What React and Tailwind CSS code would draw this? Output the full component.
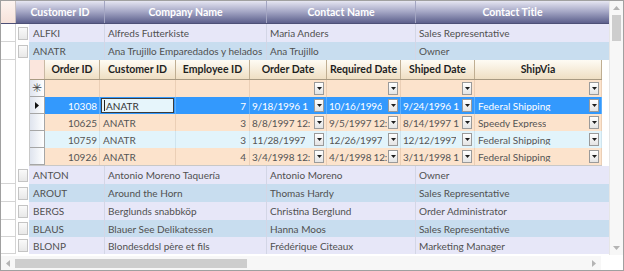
import React from "react";

const outerTop = [
    { id: "ALFKI", co: "Alfreds Futterkiste", ct: "Maria Anders", t: "Sales Representative", alt: false, h: "h-[18px]" },
    { id: "ANATR", co: "Ana Trujillo Emparedados y helados", ct: "Ana Trujillo", t: "Owner", alt: true, h: "h-[18px]" },
];

const outerBottom = [
    { id: "ANTON", co: "Antonio Moreno Taquería", ct: "Antonio Moreno", t: "Owner", alt: false, h: "h-[18px]" },
    { id: "AROUT", co: "Around the Horn", ct: "Thomas Hardy", t: "Sales Representative", alt: true, h: "h-[18px]" },
    { id: "BERGS", co: "Berglunds snabbköp", ct: "Christina Berglund", t: "Order Administrator", alt: false, h: "h-[18px]" },
    { id: "BLAUS", co: "Blauer See Delikatessen", ct: "Hanna Moos", t: "Sales Representative", alt: true, h: "h-[17px]" },
    { id: "BLONP", co: "Blondesddsl père et fils", ct: "Frédérique Citeaux", t: "Marketing Manager", alt: false, h: "h-[17px]" },
];

const orders = [
    { id: 10308, emp: 7, od: "9/18/1996 1", rd: "10/16/1996", sd: "9/24/1996 1", via: "Federal Shipping", kind: "sel" },
    { id: 10625, emp: 3, od: "8/8/1997 12:", rd: "9/5/1997 12:", sd: "8/14/1997 1", via: "Speedy Express", kind: "peach" },
    { id: 10759, emp: 3, od: "11/28/1997", rd: "12/26/1997", sd: "12/12/1997", via: "Federal Shipping", kind: "cyan" },
    { id: 10926, emp: 4, od: "3/4/1998 12:", rd: "4/1/1998 12:", sd: "3/11/1998 1", via: "Federal Shipping", kind: "peach" },
];

function DropBtn() {
    return (
        <span className="ml-auto mr-[2px] flex h-[13px] w-[10px] shrink-0 items-center justify-center border border-[#9a9a9a] bg-linear-to-b from-white to-[#e4e4e4]">
            <svg width="5" height="3" viewBox="0 0 5 3">
                <path d="M0 0h5L2.5 3z" fill="#1e1e1e" />
            </svg>
        </span>
    );
}

function Arrow({ dir }) {
    const d = {
        up: "M0 4L3.5 0L7 4z",
        down: "M0 0h7L3.5 4z",
        left: "M4 0v7L0 3.5z",
        right: "M0 0v7L4 3.5z",
    }[dir];
    const vert = dir === "up" || dir === "down";
    return (
        <svg width={vert ? 7 : 4} height={vert ? 4 : 7} viewBox={vert ? "0 0 7 4" : "0 0 4 7"}>
            <path d={d} fill="#b4b4b4" />
        </svg>
    );
}

function RowHead() {
    return <div className="w-[15px] shrink-0 self-stretch border-r border-b border-[#d4d4d4] bg-white" />;
}

function OuterRow({ r }) {
    const bg = r.alt ? "bg-[#c8ddef]" : "bg-[#e7e7f8]";
    const cell = "flex h-full shrink-0 items-center overflow-hidden whitespace-nowrap border-r border-[#d3d6e6] pl-[3px]";
    return (
        <div className={`flex ${r.h} text-[#505050]`}>
            <RowHead />
            <div className="flex h-full w-[13px] shrink-0 items-center justify-center bg-white">
                <span className="h-[13px] w-[10px] border border-[#c4c4c4] bg-linear-to-b from-[#fafafa] to-[#e8e8e8]" />
            </div>
            <div className={`flex h-full grow ${bg}`}>
                <div className={`${cell} w-[76px] pl-[4px]`}>{r.id}</div>
                <div className={`${cell} w-[162px]`}>{r.co}</div>
                <div className={`${cell} w-[149px]`}>{r.ct}</div>
                <div className={`${cell} grow border-r-0`}>{r.t}</div>
            </div>
        </div>
    );
}

function NestedHeader() {
    const h = "flex h-full shrink-0 items-center justify-center border-r border-[#bfae92] text-[10.5px] font-bold text-[#1f1f1f]";
    return (
        <div className="flex h-[20px] border-b border-[#a89a82] bg-linear-to-b from-[#fefbf4] to-[#efdfc3]">
            <div className="h-full w-[15px] shrink-0 border-r border-[#c9b9a4] bg-[#fbe6dd]" />
            <div className={`${h} w-[55px]`}>Order ID</div>
            <div className={`${h} w-[76px]`}>Customer ID</div>
            <div className={`${h} w-[74px]`}>Employee ID</div>
            <div className={`${h} w-[77px]`}>Order Date</div>
            <div className={`${h} w-[74px]`}>Required Date</div>
            <div className={`${h} w-[74px]`}>Shiped Date</div>
            <div className={`${h} w-[127px]`}>ShipVia</div>
        </div>
    );
}

function NestedRowHead({ children }) {
    return (
        <div className="flex h-full w-[15px] shrink-0 items-center justify-center border-r border-b border-[#a6a6a6] bg-linear-to-r from-[#dfe4ee] to-white">
            {children}
        </div>
    );
}

function NewRow() {
    const c = "flex h-full shrink-0 items-center border-r border-[#ebcfb6]";
    return (
        <div className="flex h-[17px] bg-[#fce3cc]">
            <NestedRowHead>
                <span className="text-[12px] leading-none text-[#444]">✳</span>
            </NestedRowHead>
            <div className={`${c} w-[55px]`} />
            <div className={`${c} w-[76px]`} />
            <div className={`${c} w-[74px]`} />
            <div className={`${c} w-[77px]`}><DropBtn /></div>
            <div className={`${c} w-[74px]`}><DropBtn /></div>
            <div className={`${c} w-[74px]`}><DropBtn /></div>
            <div className={`${c} w-[127px]`}><DropBtn /></div>
        </div>
    );
}

function DateCell({ w, line, text }) {
    return (
        <div className={`flex h-full ${w} shrink-0 items-center gap-[1px] overflow-hidden whitespace-nowrap border-r ${line} pl-[2px] tracking-[-0.2px]`}>
            <span className="min-w-0 overflow-hidden">{text}</span>
            <DropBtn />
        </div>
    );
}

function OrderRow({ o }) {
    const sel = o.kind === "sel";
    const bg = sel ? "bg-[#3399fd]" : o.kind === "cyan" ? "bg-[#e2f4fb]" : "bg-[#fce3cc]";
    const line = sel ? "border-[#5fb0fd]" : o.kind === "cyan" ? "border-[#cfe4ee]" : "border-[#ebcfb6]";
    const txt = sel ? "text-white" : "text-[#555]";
    const c = `flex h-full shrink-0 items-center overflow-hidden whitespace-nowrap border-r ${line}`;
    return (
        <div className={`flex h-[17px] ${bg} ${txt}`}>
            <NestedRowHead>
                {sel && (
                    <svg width="4" height="7" viewBox="0 0 4 7">
                        <path d="M0 0v7L4 3.5z" fill="#111" />
                    </svg>
                )}
            </NestedRowHead>
            <div className={`${c} w-[55px] justify-end pr-[2px]`}>{o.id}</div>
            {sel ? (
                <div className={`${c} w-[76px] p-[1px]`}>
                    <div className="flex h-full w-full items-center border border-[#3c3c3c] bg-[#e6f5fb] pl-[2px] text-[#333]">
                        <span className="mr-[1px] h-[11px] w-px bg-[#222]" />
                        ANATR
                    </div>
                </div>
            ) : (
                <div className={`${c} w-[76px] pl-[3px]`}>ANATR</div>
            )}
            <div className={`${c} w-[74px] justify-end pr-[3px]`}>{o.emp}</div>
            <DateCell w="w-[77px]" line={line} text={o.od} />
            <DateCell w="w-[74px]" line={line} text={o.rd} />
            <DateCell w="w-[74px]" line={line} text={o.sd} />
            <div className={`${c} w-[127px] pl-[3px]`}>
                <span className="overflow-hidden">{o.via}</span>
                <DropBtn />
            </div>
        </div>
    );
}

function NestedArea() {
    return (
        <div className="flex h-[106px]">
            <div className="flex h-full w-[29px] shrink-0 bg-white">
                <div className="h-full w-[15px] border-r border-[#d4d4d4]" />
                <div className="h-full w-[14px] border-r border-[#c8c8c8]" />
            </div>
            <div className="flex h-full w-[572px] shrink-0 flex-col border-b border-[#c8c8c8] text-[#555]">
                <NestedHeader />
                <NewRow />
                {orders.map((o) => (
                    <OrderRow key={o.id} o={o} />
                ))}
            </div>
            <div className="h-full grow bg-white" />
        </div>
    );
}

function OuterHeader() {
    const h = "flex h-full shrink-0 items-center justify-center border-r border-[#a3a5c2] text-[10.5px] font-bold text-white";
    return (
        <div className="flex h-[23px] border-b border-[#4d5077] bg-linear-to-b from-[#e6e6f2] via-[#a3a5c4] to-[#5d608c]">
            <div className="h-full w-[15px] shrink-0 border-r border-[#c8c0c0] bg-linear-to-b from-[#fdf4f0] to-[#f6e2da]" />
            <div className={`${h} w-[89px]`}>Customer ID</div>
            <div className={`${h} w-[162px]`}>Company Name</div>
            <div className={`${h} w-[149px]`}>Contact Name</div>
            <div className={`${h} grow border-r-0`}>Contact Title</div>
        </div>
    );
}

export default function App() {
    return (
        <div className="flex h-[271px] w-[624px] flex-col border border-[#a0a0a0] bg-white font-['Lato',sans-serif] text-[10px] leading-none">
            <div className="flex h-[254px]">
                <div className="flex w-[608px] shrink-0 flex-col">
                    <OuterHeader />
                    {outerTop.map((r) => (
                        <OuterRow key={r.id} r={r} />
                    ))}
                    <NestedArea />
                    {outerBottom.map((r) => (
                        <OuterRow key={r.id} r={r} />
                    ))}
                </div>
                <div className="flex w-[14px] shrink-0 flex-col items-center border-l border-[#e6e6e6] bg-[#f7f7f7]">
                    <div className="flex h-[14px] items-center justify-center">
                        <Arrow dir="up" />
                    </div>
                    <div className="h-[26px] w-[9px] bg-[#cdcdcd]" />
                    <div className="grow" />
                    <div className="flex h-[14px] items-center justify-center">
                        <Arrow dir="down" />
                    </div>
                </div>
            </div>
            <div className="mt-px flex h-[14px]">
                <div className="flex w-[600px] shrink-0 items-center bg-[#f7f7f7]">
                    <div className="flex h-full w-[14px] items-center justify-center">
                        <Arrow dir="left" />
                    </div>
                    <div className="h-[9px] w-[232px] bg-[#cdcdcd]" />
                    <div className="grow" />
                    <div className="flex h-full w-[14px] items-center justify-center">
                        <Arrow dir="right" />
                    </div>
                </div>
                <div className="grow bg-white" />
            </div>
        </div>
    );
}
